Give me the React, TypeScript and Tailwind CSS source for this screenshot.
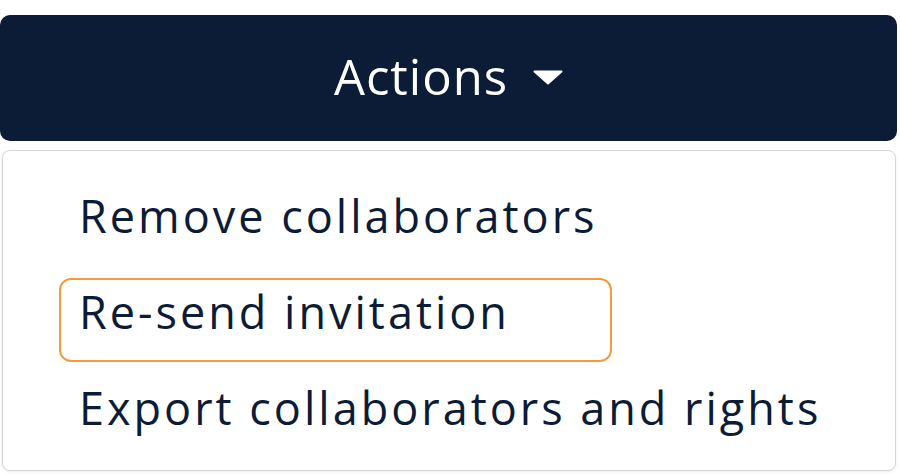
import React from 'react';

const items = ['Remove collaborators', 'Re-send invitation', 'Export collaborators and rights'];

const App = () => {
  return (
    <div className="w-[900px] h-[474px] bg-white overflow-hidden pt-[15px]" style={{ fontFamily: '"Open Sans", Lato, sans-serif' }}>
      <button className="flex w-[897px] h-[126px] items-center justify-center gap-[25px] rounded-[10px] bg-[#0c1c36] text-white">
        <span className="mb-[4px] text-[49px] leading-none tracking-[1px]">Actions</span>
        <svg width="30" height="15" viewBox="0 0 30 15" className="mb-[1px]">
          <path d="M1.5 1.5 H28.5 L15 13.5 Z" fill="white" stroke="white" strokeWidth="2" strokeLinejoin="round" />
        </svg>
      </button>

      <div className="ml-[2px] mt-[9px] flex h-[321px] w-[894px] flex-col gap-[12px] rounded-[8px] border border-[#d6d6d6] bg-white pt-[31px] shadow-[0_1px_3px_rgba(0,0,0,0.08)]">
        {items.map((label, i) => (
          <div
            key={label}
            className={
              i === 1
                ? 'ml-[56px] flex h-[84px] w-[553px] items-center rounded-[12px] border-2 border-[#f59b3d] pb-[17px] pl-[18px]'
                : 'ml-[56px] flex h-[84px] w-[553px] items-center rounded-[12px] border-2 border-transparent pb-[17px] pl-[18px]'
            }
          >
            <span className="whitespace-nowrap text-[45px] leading-none tracking-[3px] text-[#0c1c36]">{label}</span>
          </div>
        ))}
      </div>
    </div>
  );
};

export default App;
